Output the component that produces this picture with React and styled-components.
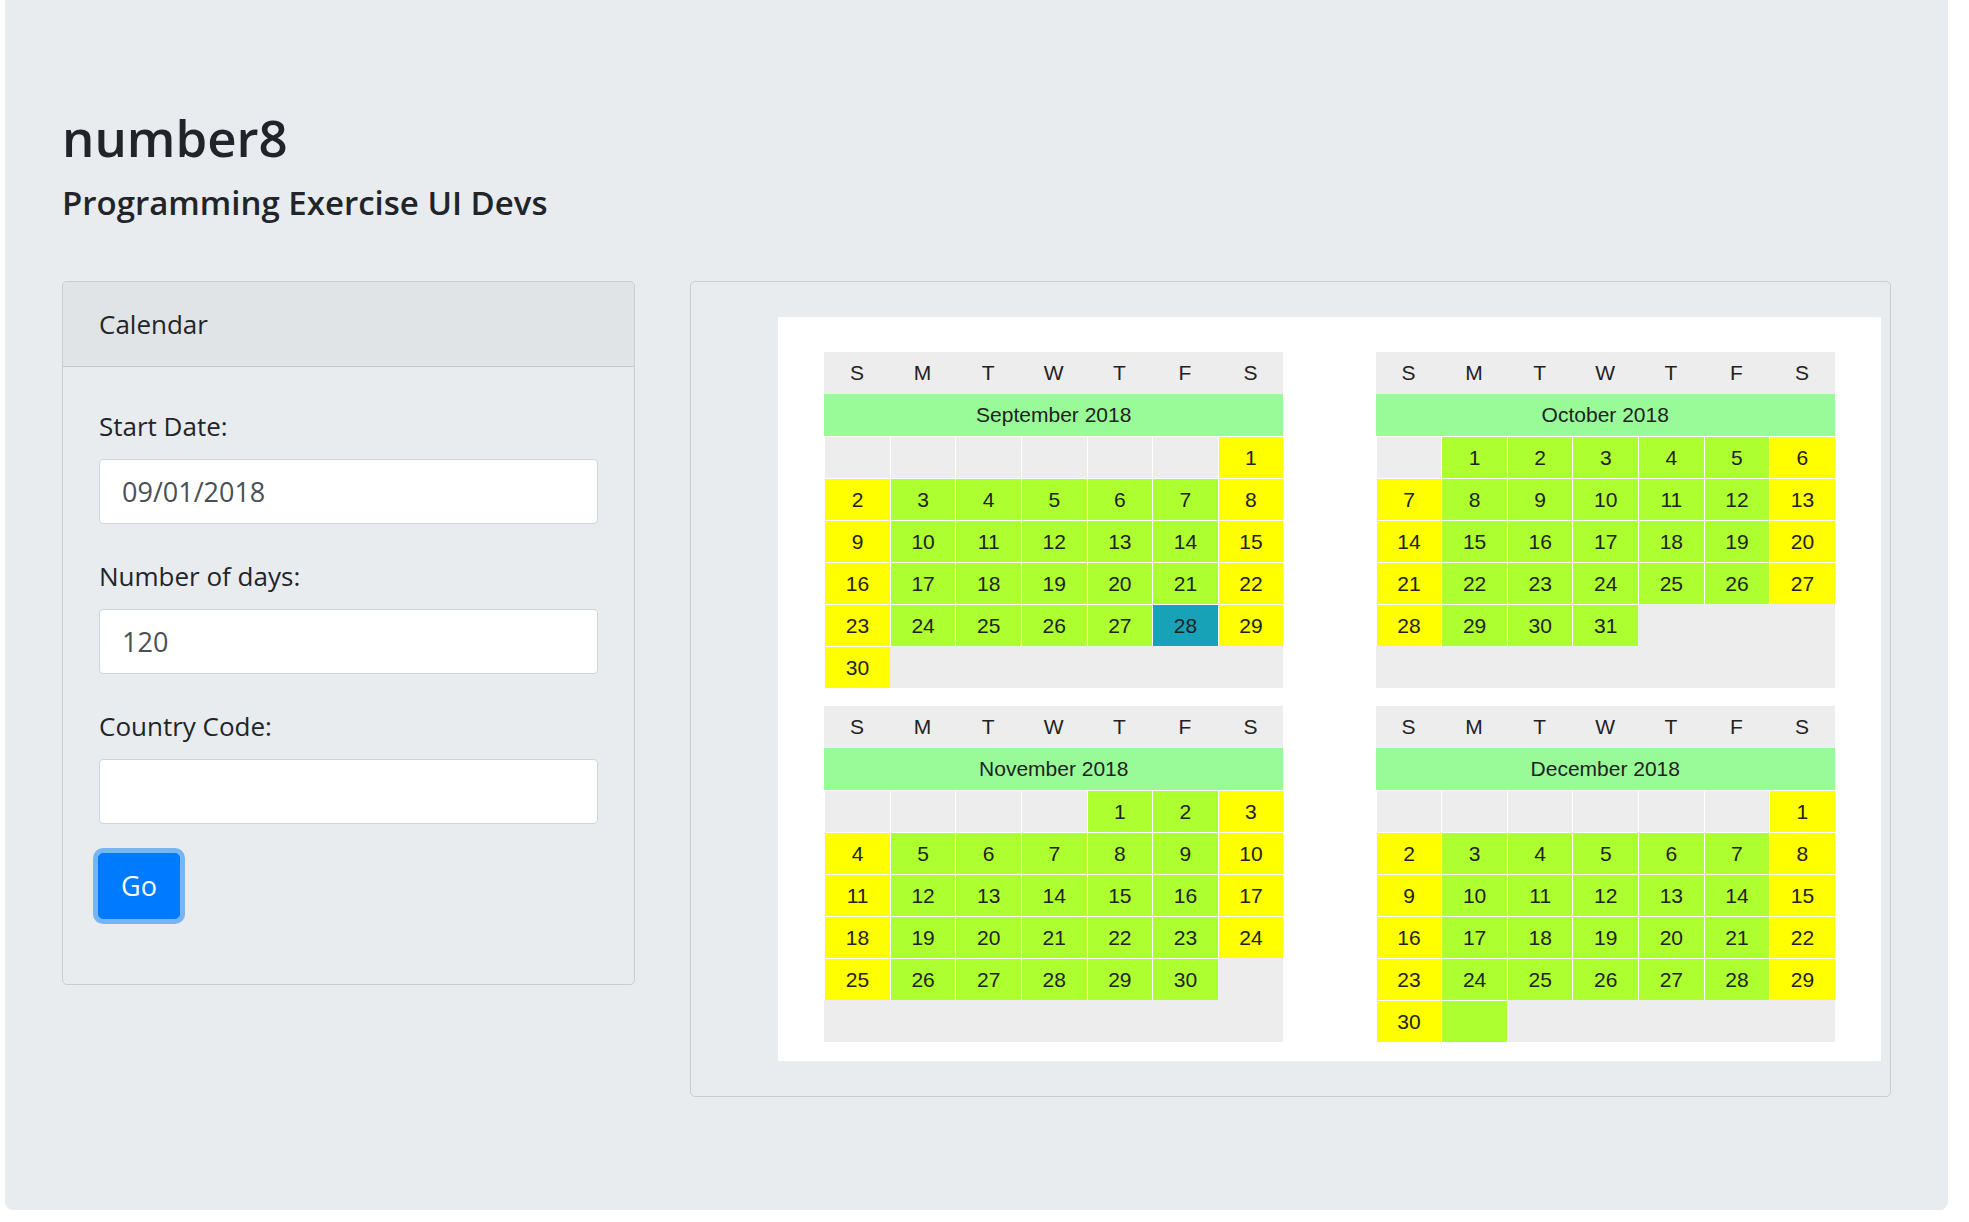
import React from "react";
import styled, { createGlobalStyle } from "styled-components";

const GlobalStyle = createGlobalStyle`
  html, body { margin: 0; padding: 0; background: #fff; }
  body { font-family: "Open Sans", "Noto Sans", sans-serif; color: #212529; }
  *, *::before, *::after { box-sizing: border-box; }
`;

const Jumbotron = styled.div`
  margin-left: 5px;
  width: 1943px;
  background: #e9ecef;
  border-radius: 0 0 8px 8px;
  padding: 106px 57px 113px;
`;

const Title = styled.h1`
  margin: 0;
  font-size: 51px;
  line-height: 62px;
  font-weight: 600;
  color: #212529;
`;

const Subtitle = styled.h3`
  margin: 14px 0 0;
  font-size: 33px;
  line-height: 42px;
  font-weight: 600;
  color: #212529;
`;

const Row = styled.div`
  display: flex;
  align-items: flex-start;
  gap: 55px;
  margin-top: 57px;
`;

const Card = styled.div`
  border: 1px solid rgba(0, 0, 0, 0.125);
  border-radius: 5px;
  background: transparent;
  ${(p) => (p.$grow ? "flex: 1 1 auto;" : `flex: 0 0 ${p.$width}px;`)}
`;

const CardHeader = styled.div`
  padding: 22px 36px;
  font-size: 26px;
  line-height: 40px;
  background: rgba(0, 0, 0, 0.03);
  border-bottom: 1px solid rgba(0, 0, 0, 0.125);
  border-radius: 5px 5px 0 0;
`;

const FormBody = styled.div`
  padding: 36px 36px 65px;
`;

const FormGroup = styled.div`
  margin-bottom: 29px;
`;

const Label = styled.label`
  display: block;
  font-size: 26px;
  line-height: 40px;
  padding-top: 3px;
  margin-bottom: 13px;
  color: #212529;
`;

const Input = styled.input`
  display: block;
  width: 100%;
  height: 65px;
  padding: 0 22px;
  font-family: "Open Sans", "Noto Sans", sans-serif;
  font-size: 27px;
  color: #495057;
  background: #fff;
  border: 1px solid #ced4da;
  border-radius: 4px;
  outline: none;
`;

const GoButton = styled.button`
  display: inline-block;
  height: 66px;
  margin-left: -1px;
  padding: 0 22px;
  font-family: "Open Sans", "Noto Sans", sans-serif;
  font-size: 27px;
  line-height: 40px;
  color: #fff;
  background: #007bff;
  border: 1px solid #007bff;
  border-radius: 5px;
  box-shadow: 0 0 0 5px rgba(0, 123, 255, 0.5);
  cursor: pointer;
`;

const CalBody = styled.div`
  padding: 35px 9px 35px 87px;
`;

const Sheet = styled.div`
  background: #fff;
  padding: 35px 0 19px;
  display: grid;
  grid-template-columns: 1fr 1fr;
  row-gap: 18px;
`;

const Month = styled.div`
  justify-self: center;
  width: 459px;
  background: #ededed;
  font-family: "Liberation Sans", Arial, sans-serif;
  font-size: 21px;
  color: #222;
`;

const WeekRow = styled.div`
  display: grid;
  grid-template-columns: repeat(7, 1fr);
  height: 42px;
`;

const WeekDay = styled.div`
  display: flex;
  align-items: center;
  justify-content: center;
`;

const MonthTitle = styled.div`
  height: 42px;
  background: #98fb98;
  display: flex;
  align-items: center;
  justify-content: center;
`;

const Days = styled.div`
  display: grid;
  grid-template-columns: repeat(7, 1fr);
  grid-template-rows: repeat(6, 42px);
`;

const cellColors = {
  empty: "#ededed",
  weekday: "#adff2f",
  weekend: "#ffff00",
  selected: "#17a2b8",
};

const Day = styled.div`
  display: flex;
  align-items: center;
  justify-content: center;
  border-left: 1px solid #fff;
  border-top: 1px solid #fff;
  background: ${(p) => cellColors[p.$kind]};
`;

const WEEK = ["S", "M", "T", "W", "T", "F", "S"];

const MONTHS = [
  { name: "September 2018", start: 6, days: 30, selected: 28 },
  { name: "October 2018", start: 1, days: 31 },
  { name: "November 2018", start: 4, days: 30 },
  { name: "December 2018", start: 6, days: 30, extra: 1 },
];

function buildCells(m) {
  const cells = [];
  for (let i = 0; i < m.start; i++) cells.push({ kind: "empty", label: "" });
  for (let d = 1; d <= m.days; d++) {
    const dow = (m.start + d - 1) % 7;
    let kind = dow === 0 || dow === 6 ? "weekend" : "weekday";
    if (m.selected === d) kind = "selected";
    cells.push({ kind, label: String(d) });
  }
  for (let i = 0; i < (m.extra || 0); i++) {
    const dow = (m.start + m.days + i) % 7;
    cells.push({ kind: dow === 0 || dow === 6 ? "weekend" : "weekday", label: "" });
  }
  return cells;
}

function MonthCalendar({ month }) {
  const cells = buildCells(month);
  return (
    <Month>
      <WeekRow>
        {WEEK.map((w, i) => (
          <WeekDay key={i}>{w}</WeekDay>
        ))}
      </WeekRow>
      <MonthTitle>{month.name}</MonthTitle>
      <Days>
        {cells.map((c, i) => (
          <Day key={i} $kind={c.kind}>
            {c.label}
          </Day>
        ))}
      </Days>
    </Month>
  );
}

export default function App() {
  return (
    <>
      <GlobalStyle />
      <Jumbotron>
        <Title>number8</Title>
        <Subtitle>Programming Exercise UI Devs</Subtitle>
        <Row>
          <Card $width={573}>
            <CardHeader>Calendar</CardHeader>
            <FormBody>
              <FormGroup>
                <Label>Start Date:</Label>
                <Input defaultValue="09/01/2018" />
              </FormGroup>
              <FormGroup>
                <Label>Number of days:</Label>
                <Input defaultValue="120" />
              </FormGroup>
              <FormGroup>
                <Label>Country Code:</Label>
                <Input defaultValue="" />
              </FormGroup>
              <GoButton>Go</GoButton>
            </FormBody>
          </Card>
          <Card $grow>
            <CalBody>
              <Sheet>
                {MONTHS.map((m) => (
                  <MonthCalendar key={m.name} month={m} />
                ))}
              </Sheet>
            </CalBody>
          </Card>
        </Row>
      </Jumbotron>
    </>
  );
}
